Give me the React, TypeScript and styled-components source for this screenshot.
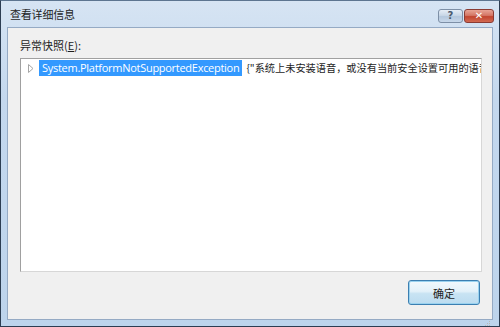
import * as React from 'react'
import styled, { createGlobalStyle } from 'styled-components'

const GlobalStyle = createGlobalStyle`
  html, body {
    margin: 0;
    padding: 0;
    background: #ffffff;
  }
  body {
    font-family: "Noto Sans", "Noto Sans CJK SC", sans-serif;
  }
`

const Window = styled.div`
  width: 500px;
  height: 327px;
  box-sizing: border-box;
  border: 1px solid #2c3d52;
  border-top-color: #5d7590;
  background: linear-gradient(180deg, #d6e4f3 0%, #c4d8ee 30%, #bdd4ec 100%);
  display: flex;
  flex-direction: column;
  overflow: hidden;
`

const TitleBar = styled.div`
  height: 26px;
  flex: none;
  display: flex;
  align-items: center;
  justify-content: space-between;
  padding: 0 5px 0 9px;
`

const Caption = styled.div`
  font-family: "Noto Sans CJK SC", sans-serif;
  font-size: 11px;
  color: #1e1e1e;
  letter-spacing: -0.2px;
  margin-top: -1px;
`

const CaptionButtons = styled.div`
  display: flex;
  gap: 1px;
  align-self: flex-start;
  margin-top: 8px;
`

const CaptionButton = styled.div<{ $close?: boolean }>`
  width: ${p => (p.$close ? 30 : 25)}px;
  height: 14px;
  box-sizing: border-box;
  border: 1px solid ${p => (p.$close ? '#8a3b33' : '#7d8fa6')};
  border-radius: 3px;
  background: ${p =>
    p.$close
      ? 'linear-gradient(180deg, #e8a495 0%, #d47766 45%, #c2452f 55%, #d26a52 100%)'
      : 'linear-gradient(180deg, #e5edf6 0%, #c9d7e7 45%, #b4c7dd 55%, #c8d8ea 100%)'};
  display: flex;
  align-items: center;
  justify-content: center;
  color: ${p => (p.$close ? '#ffffff' : '#4b5a6e')};
  font-family: "DejaVu Sans", sans-serif;
  font-size: 10px;
  font-weight: bold;
  line-height: 1;
`

const Client = styled.div`
  flex: 1;
  margin: 0 6px 6px 6px;
  background: #f0f0f0;
  border: 1px solid #95aac4;
  display: flex;
  flex-direction: column;
  padding: 9px 10px 0 12px;
  position: relative;
`

const Label = styled.div`
  font-family: "Noto Sans CJK SC", sans-serif;
  font-size: 11px;
  color: #1e1e1e;
  height: 17px;
  line-height: 17px;
  margin-bottom: 4px;
  & u {
    text-decoration: underline;
  }
`

const TreeBox = styled.div`
  height: 214px;
  box-sizing: border-box;
  background: #ffffff;
  border: 1px solid #a0a0a0;
  border-right-color: #d7d7d7;
  border-bottom-color: #d7d7d7;
  overflow: hidden;
  padding-top: 1px;
`

const TreeRow = styled.div`
  display: flex;
  align-items: center;
  height: 16px;
  white-space: nowrap;
`

const Expander = styled.span`
  width: 16px;
  flex: none;
  display: flex;
  justify-content: center;
  padding-left: 2px;
`

const Selected = styled.span`
  background: #3399ff;
  color: #ffffff;
  font-family: "Open Sans", "Noto Sans", sans-serif;
  font-size: 11px;
  line-height: 16px;
  height: 16px;
  padding: 0 3px 0 3px;
  letter-spacing: -0.28px;
`

const Value = styled.span`
  font-family: "Noto Sans CJK SC", sans-serif;
  font-size: 10.2px;
  color: #1e1e1e;
  line-height: 16px;
  margin-left: 4px;
`

const Footer = styled.div`
  flex: 1;
  display: flex;
  justify-content: flex-end;
  align-items: flex-start;
  padding-top: 8px;
`

const OkButton = styled.button`
  width: 72px;
  height: 25px;
  box-sizing: border-box;
  border: 1px solid #3c7fb1;
  border-radius: 3px;
  background: linear-gradient(180deg, #f2f9fd 0%, #e3f1f9 45%, #c8e3f3 55%, #bcdcf0 100%);
  box-shadow: inset 0 0 0 1px #9ad2ef;
  font-family: "Noto Sans CJK SC", sans-serif;
  font-size: 11px;
  color: #1e1e1e;
  padding: 0;
  margin-right: 2px;
`

const Grip = styled.div`
  position: absolute;
  right: 1px;
  bottom: 1px;
  width: 8px;
  height: 8px;
`

const App: React.FC = () => (
  <>
    <GlobalStyle />
    <Window>
      <TitleBar>
        <Caption>查看详细信息</Caption>
        <CaptionButtons>
          <CaptionButton>?</CaptionButton>
          <CaptionButton $close>✕</CaptionButton>
        </CaptionButtons>
      </TitleBar>
      <Client>
        <Label>
          异常快照(<u>E</u>):
        </Label>
        <TreeBox>
          <TreeRow>
            <Expander>
              <svg width="6" height="9" viewBox="0 0 6 9">
                <path d="M0.5 0.5 L5 4.5 L0.5 8.5 Z" fill="none" stroke="#a6a6a6" strokeWidth="1" />
              </svg>
            </Expander>
            <Selected>System.PlatformNotSupportedException</Selected>
            <Value>{'{"系统上未安装语音，或没有当前安全设置可用的语音。"}'}</Value>
          </TreeRow>
        </TreeBox>
        <Footer>
          <OkButton>确定</OkButton>
        </Footer>
        <Grip>
          <svg width="8" height="8" viewBox="0 0 8 8">
            <rect x="6" y="2" width="1" height="1" fill="#b8b8b8" />
            <rect x="4" y="4" width="1" height="1" fill="#b8b8b8" />
            <rect x="6" y="4" width="1" height="1" fill="#b8b8b8" />
            <rect x="2" y="6" width="1" height="1" fill="#b8b8b8" />
            <rect x="4" y="6" width="1" height="1" fill="#b8b8b8" />
            <rect x="6" y="6" width="1" height="1" fill="#b8b8b8" />
          </svg>
        </Grip>
      </Client>
    </Window>
  </>
)

export default App
